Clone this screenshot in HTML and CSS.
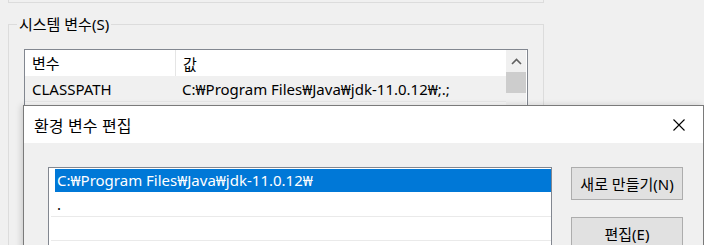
FILE: index.html
```html
<!DOCTYPE html>
<html>

<head>
    <meta charset="utf-8">
    <link rel="stylesheet" href="styles.css">
</head>

<body>
    <div class="window">
        <!-- previous group box (only its bottom edge is visible) -->
        <div class="prev-group"></div>

        <!-- System variables -->
        <fieldset class="group">
            <legend>시스템 변수(S)</legend>
            <div class="listview">
                <div class="lv-body">
                    <div class="lv-header">
                        <div class="lv-col lv-name">변수</div>
                        <div class="lv-col">값</div>
                    </div>
                    <div class="lv-row lv-active">
                        <div class="lv-col lv-name">CLASSPATH</div>
                        <div class="lv-col">C:₩Program Files₩Java₩jdk-11.0.12₩;.;</div>
                    </div>
                    <div class="lv-row lv-next"></div>
                </div>
                <div class="scrollbar">
                    <div class="sb-arrow">
                        <svg width="11" height="7" viewBox="0 0 11 7">
                            <path d="M1 6 L5.5 1.5 L10 6" fill="none" stroke="#606060" stroke-width="1.6"/>
                        </svg>
                    </div>
                    <div class="sb-thumb"></div>
                </div>
            </div>
        </fieldset>
    </div>

    <!-- Edit environment variable dialog -->
    <div class="dialog">
        <div class="titlebar">
            <span class="title">환경 변수 편집</span>
            <svg class="close" width="12" height="12" viewBox="0 0 12 12">
                <path d="M0.5 0.5 L11.5 11.5 M11.5 0.5 L0.5 11.5" stroke="#000" stroke-width="1.1"/>
            </svg>
        </div>
        <div class="dialog-body">
            <div class="pathlist">
                <div class="path-item selected">C:₩Program Files₩Java₩jdk-11.0.12₩</div>
                <div class="path-item">.</div>
                <div class="path-item"></div>
            </div>
            <div class="buttons">
                <button class="btn">새로 만들기(N)</button>
                <button class="btn">편집(E)</button>
            </div>
        </div>
    </div>
</body>

</html>
```

FILE: styles.css
```css
body {
    margin: 0;
    height: 245px;
    overflow: hidden;
    background-color: #f0f0f0;
    font-family: "Noto Sans", "Noto Sans CJK KR", sans-serif;
    font-size: 15px;
    color: #000;
    position: relative;
}

.window {
    padding-left: 8px;
    width: 536px;
}

.prev-group {
    height: 2px;
    border: 1px solid #dcdcdc;
    border-top: none;
}

.group {
    margin: 12px 0 0 0;
    padding: 12px 15px 0 15px;
    border: 1px solid #dcdcdc;
    height: 230px;
}

.group legend {
    padding: 0 2px;
    margin-left: -7px;
    line-height: 18px;
}

.listview {
    display: flex;
    border: 1px solid #828790;
    background: #fff;
    height: 200px;
    margin-top: 4px;
}

.lv-body {
    flex: 1;
}

.lv-header,
.lv-row {
    display: flex;
    align-items: center;
}

.lv-header {
    height: 26px;
}

.lv-header .lv-name {
    border-right: 1px solid #e5e5e5;
    height: 26px;
    line-height: 26px;
}

.lv-row {
    height: 25px;
}

.lv-active {
    background: #f0f0f0;
}

.lv-next {
    background: #f7f7f7;
    border-top: 1px solid #e8e8e8;
}

.lv-col {
    padding-left: 7px;
    white-space: nowrap;
}

.lv-name {
    width: 143px;
}

.scrollbar {
    width: 20px;
    margin-right: 1px;
    background: #f0f0f0;
}

.sb-arrow {
    height: 22px;
    display: flex;
    align-items: center;
    justify-content: center;
}

.sb-thumb {
    height: 21px;
    background: #cdcdcd;
}

.dialog {
    position: absolute;
    left: 23px;
    top: 105px;
    width: 679px;
    height: 200px;
    border: 1px solid #7a7a7a;
    background: #f0f0f0;
    box-shadow: -2px 0 6px rgba(0, 0, 0, 0.15);
}

.titlebar {
    height: 37px;
    background: #fff;
    display: flex;
    align-items: center;
    justify-content: space-between;
    padding: 0 18px 0 10px;
}

.title {
    font-family: "Noto Sans CJK KR", sans-serif;
    font-size: 16px;
    word-spacing: 1px;
}

.dialog-body {
    display: flex;
    align-items: flex-start;
    padding: 24px 0 0 24px;
}

.pathlist {
    width: 501px;
    height: 120px;
    border: 1px solid #828790;
    background: #fff;
    padding: 1px 0 0 1px;
}

.path-item {
    height: 23px;
    line-height: 23px;
    border-bottom: 1px solid #eaeaea;
    padding-left: 6px;
    margin-left: 1px;
}

.path-item.selected {
    background: #0078d7;
    color: #fff;
    margin-left: 5px;
    padding-left: 2px;
    border-bottom-color: #fff;
}

.buttons {
    display: flex;
    flex-direction: column;
    gap: 17px;
    margin-left: 19px;
}

.btn {
    width: 112px;
    height: 33px;
    border: 1px solid #adadad;
    background: #e1e1e1;
    font-family: "Noto Sans", "Noto Sans CJK KR", sans-serif;
    font-size: 15px;
    padding: 0;
    color: #000;
}
```
